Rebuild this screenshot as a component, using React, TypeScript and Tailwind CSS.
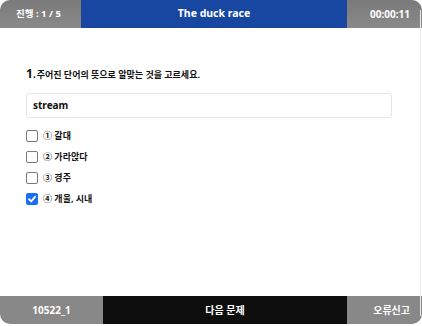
import React from "react";

const font = { fontFamily: '"Noto Sans", "Noto Sans CJK KR", sans-serif' };

function Box({ checked }: { checked?: boolean }) {
  if (checked) {
    return (
      <span className="w-[12px] h-[12px] rounded-[2px] bg-[#1a6ef5] flex items-center justify-center shrink-0">
        <svg width="10" height="10" viewBox="0 0 10 10">
          <path d="M2 5.2 L4.2 7.4 L8.2 2.6" stroke="white" strokeWidth="1.8" fill="none" strokeLinecap="round" strokeLinejoin="round" />
        </svg>
      </span>
    );
  }
  return <span className="w-[12px] h-[12px] rounded-[2px] border border-[#7a7a7a] bg-white shrink-0" />;
}

export default function App() {
  const opts = [
    { n: "①", t: "갈대" },
    { n: "②", t: "가라앉다" },
    { n: "③", t: "경주" },
    { n: "④", t: "개울, 시내", c: true },
  ];
  return (
    <div className="w-[422px] h-[326px] bg-white flex flex-col relative overflow-hidden" style={font}>
      <div className="absolute right-[1px] top-[10px] bottom-[10px] w-px bg-[#ececec]" />
      {/* header */}
      <div className="h-[28px] flex shrink-0 rounded-t-[10px] overflow-hidden text-white font-bold text-[10px]">
        <div className="w-[81px] bg-gradient-to-b from-[#7a7a7a] to-[#8a8a8a] flex items-center pl-[16px] text-[9.5px]">진행 : 1 / 5</div>
        <div className="w-[266px] bg-[#1747a0] flex items-center justify-center text-[10.5px]">The duck race</div>
        <div className="flex-1 bg-gradient-to-b from-[#7a7a7a] to-[#8a8a8a] flex items-center justify-end pr-[12px]">00:00:11</div>
      </div>
      {/* content */}
      <div className="flex-1 flex flex-col px-[26px] pt-[40px]">
        <div className="flex items-baseline text-[#111] font-bold text-[9px] leading-none">
          <span className="text-[12px]">1</span>
          <span className="text-[10px]">.</span>
          <span className="ml-[1px]">주어진 단어의 뜻으로 알맞는 것을 고르세요.</span>
        </div>
        <div className="mt-[13px] w-[366px] h-[25px] border border-[#e6e6e6] rounded-[3px] flex items-center pl-[6px] text-[10px] font-bold text-[#111]">
          stream
        </div>
        <div className="mt-[12px] flex flex-col gap-[9px]">
          {opts.map((o) => (
            <div key={o.t} className="flex items-center h-[12px] text-[9px] font-bold text-[#111]">
              <Box checked={o.c} />
              <span className="ml-[5px]">{o.n} {o.t}</span>
            </div>
          ))}
        </div>
      </div>
      {/* footer */}
      <div className="h-[28px] mb-[2px] flex shrink-0 rounded-b-[10px] overflow-hidden text-white font-bold text-[10px]">
        <div className="w-[103px] bg-[#888888] flex items-center justify-center">10522_1</div>
        <div className="w-[244px] bg-[#0e0e0e] flex items-center justify-center">다음 문제</div>
        <div className="flex-1 bg-[#888888] flex items-center justify-end pr-[12px]">오류신고</div>
      </div>
    </div>
  );
}
